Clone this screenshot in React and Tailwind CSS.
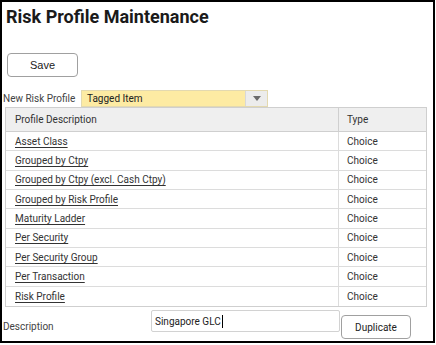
const rows = [
  'Asset Class',
  'Grouped by Ctpy',
  'Grouped by Ctpy (excl. Cash Ctpy)',
  'Grouped by Risk Profile',
  'Maturity Ladder',
  'Per Security',
  'Per Security Group',
  'Per Transaction',
  'Risk Profile',
]

export default function App() {
  return (
    <div className="h-[345px] w-[436px] bg-white font-['Roboto',sans-serif] text-[10px] text-[#333]">
      <div className="h-[343px] w-[435px] border-2 border-black">
        <h1 className="pl-[4px] pt-[3px] text-[18px] font-bold leading-[24px] text-[#1a1a1a]">Risk Profile Maintenance</h1>
        <div className="pl-[5px] pt-[24px]">
          <button className="h-[24px] w-[71px] rounded-[4px] border border-[#a0a0a0] bg-white font-['Liberation_Sans',sans-serif] text-[11px] text-[#222]">Save</button>
        </div>
        <div className="mt-[13px] flex h-[17px] items-center">
          <span className="w-[79px] whitespace-nowrap pl-[1px] text-[#444]">New Risk Profile</span>
          <div className="flex h-[17px] w-[187px] border border-[#e3d9b0]">
            <div className="flex flex-1 items-center bg-[#fdeba3] pl-[5px] text-[#222]">Tagged Item</div>
            <div className="flex w-[22px] items-center justify-center border-l border-[#d8d8d8] bg-[#ececec]">
              <svg width="8" height="5" viewBox="0 0 8 5"><path d="M0 0h8L4 5z" fill="#6b6b6b" /></svg>
            </div>
          </div>
        </div>
        <div className="ml-[3px] w-[422px] border border-[#cfcfcf]">
          <div className="flex h-[24px] border-b border-[#cfcfcf] bg-[#efefef]">
            <div className="flex flex-1 items-center border-r border-[#cfcfcf] pl-[9px]">Profile Description</div>
            <div className="flex w-[87px] items-center pl-[8px]">Type</div>
          </div>
          {rows.map((r, i) => (
            <div key={r} className={`flex h-[19.35px] ${i < rows.length - 1 ? 'border-b border-[#dcdcdc]' : ''}`}>
              <div className="flex flex-1 items-center border-r border-[#dcdcdc] pl-[9px]">
                <a className="text-[#333] underline underline-offset-[2px]">{r}</a>
              </div>
              <div className="flex w-[87px] items-center pl-[8px]">Choice</div>
            </div>
          ))}
        </div>
        <div className="mt-[3px] flex">
          <span className="mt-[9px] w-[149px] pl-[1px] text-[#444]">Description</span>
          <div className="flex h-[22px] w-[189px] items-center rounded-[2px] border border-[#d2d2d2] pl-[3px] text-[#222]">
            Singapore GLC<span className="ml-[1px] inline-block h-[13px] w-px bg-black" />
          </div>
          <button className="mt-[5px] ml-px h-[24px] w-[70px] rounded-[4px] border border-[#a0a0a0] bg-white text-[10px] text-[#222]">Duplicate</button>
        </div>
      </div>
    </div>
  )
}
